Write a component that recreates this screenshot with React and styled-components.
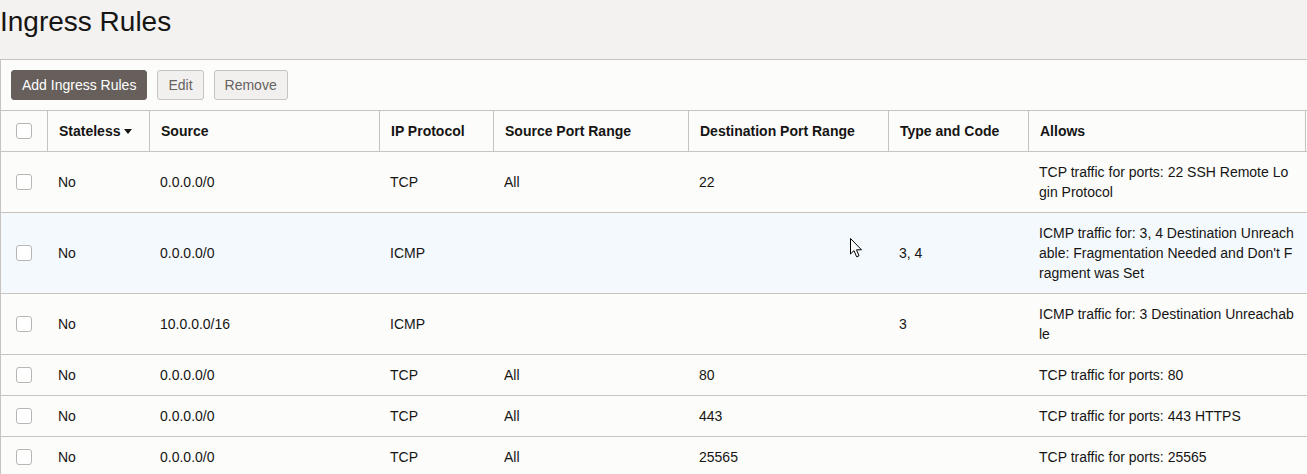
import React from "react";
import styled, { createGlobalStyle } from "styled-components";

const GlobalStyle = createGlobalStyle`
  html, body {
    margin: 0;
    padding: 0;
    background: #f3f2f1;
    font-family: "Liberation Sans", Arial, sans-serif;
    color: #161513;
  }
  * { box-sizing: border-box; }
`;

const Page = styled.div`
  position: relative;
  width: 1307px;
  height: 474px;
  overflow: hidden;
`;

const Title = styled.h1`
  margin: 0;
  padding: 6px 0 21px 0;
  font-size: 28px;
  line-height: 32px;
  font-weight: 400;
  color: #161513;
`;

const Panel = styled.section`
  background: #fcfcfb;
  border-top: 1px solid #c6c3c0;
  border-left: 1px solid #c6c3c0;
  min-height: 420px;
`;

const Toolbar = styled.div`
  display: flex;
  align-items: center;
  gap: 10px;
  padding: 10px 10px;
`;

const Button = styled.button`
  height: 30px;
  padding: 0 10px;
  border-radius: 3px;
  font-family: "Liberation Sans", Arial, sans-serif;
  font-size: 14px;
  line-height: 28px;
  cursor: pointer;
  border: 1px solid ${(p) => (p.$primary ? "#665f5b" : "#c6c3c0")};
  background: ${(p) => (p.$primary ? "#665f5b" : "#f1f0ee")};
  color: ${(p) => (p.$primary ? "#ffffff" : "#656260")};
`;

const COLS = "46px 102px 230px 114px 195px 200px 140px 278px";

const HeaderRow = styled.div`
  display: grid;
  grid-template-columns: ${COLS};
  border-top: 1px solid #c6c3c0;
  border-bottom: 1px solid #c6c3c0;
  height: 42px;
`;

const HeadCell = styled.div`
  display: flex;
  align-items: center;
  padding: 0 11px;
  font-size: 14px;
  font-weight: 700;
  border-left: ${(p) => (p.$first ? "none" : "1px solid #c6c3c0")};
  border-right: ${(p) => (p.$last ? "1px solid #c6c3c0" : "none")};
  white-space: nowrap;
`;

const CheckCell = styled.div`
  display: flex;
  align-items: center;
  padding-left: 15px;
`;

const Checkbox = styled.span`
  display: inline-block;
  width: 16px;
  height: 16px;
  border: 1px solid #b9b6b3;
  border-radius: 3px;
  background: #ffffff;
`;

const Caret = styled.span`
  display: inline-block;
  margin-left: 4px;
  margin-top: 1px;
  width: 0;
  height: 0;
  border-left: 4.5px solid transparent;
  border-right: 4.5px solid transparent;
  border-top: 5px solid #161513;
`;

const Row = styled.div`
  display: grid;
  grid-template-columns: ${COLS};
  border-bottom: 1px solid #c6c3c0;
  background: ${(p) => (p.$hover ? "#f4f9fd" : "transparent")};
`;

const Cell = styled.div`
  display: flex;
  align-items: center;
  padding: 10px 11px;
  font-size: 14px;
  line-height: 20px;
`;

const AllowsCell = styled(Cell)`
  word-break: break-all;
`;

const Cursor = styled.svg`
  position: absolute;
  left: 850px;
  top: 238px;
  width: 13px;
  height: 20px;
  pointer-events: none;
`;

const rules = [
  { source: "0.0.0.0/0", proto: "TCP", srcPort: "All", dstPort: "22", type: "", allows: "TCP traffic for ports: 22 SSH Remote Login Protocol" },
  { source: "0.0.0.0/0", proto: "ICMP", srcPort: "", dstPort: "", type: "3, 4", allows: "ICMP traffic for: 3, 4 Destination Unreachable: Fragmentation Needed and Don't Fragment was Set", hover: true },
  { source: "10.0.0.0/16", proto: "ICMP", srcPort: "", dstPort: "", type: "3", allows: "ICMP traffic for: 3 Destination Unreachable" },
  { source: "0.0.0.0/0", proto: "TCP", srcPort: "All", dstPort: "80", type: "", allows: "TCP traffic for ports: 80" },
  { source: "0.0.0.0/0", proto: "TCP", srcPort: "All", dstPort: "443", type: "", allows: "TCP traffic for ports: 443 HTTPS" },
  { source: "0.0.0.0/0", proto: "TCP", srcPort: "All", dstPort: "25565", type: "", allows: "TCP traffic for ports: 25565" },
];

const App = () => {
  return (
    <Page>
      <GlobalStyle />
      <Title>Ingress Rules</Title>
      <Panel>
        <Toolbar>
          <Button $primary>Add Ingress Rules</Button>
          <Button>Edit</Button>
          <Button>Remove</Button>
        </Toolbar>
        <HeaderRow>
          <CheckCell>
            <Checkbox />
          </CheckCell>
          <HeadCell>
            Stateless
            <Caret />
          </HeadCell>
          <HeadCell>Source</HeadCell>
          <HeadCell>IP Protocol</HeadCell>
          <HeadCell>Source Port Range</HeadCell>
          <HeadCell>Destination Port Range</HeadCell>
          <HeadCell>Type and Code</HeadCell>
          <HeadCell $last>Allows</HeadCell>
        </HeaderRow>
        {rules.map((r, i) => (
          <Row key={i} $hover={r.hover}>
            <CheckCell>
              <Checkbox />
            </CheckCell>
            <Cell>No</Cell>
            <Cell>{r.source}</Cell>
            <Cell>{r.proto}</Cell>
            <Cell>{r.srcPort}</Cell>
            <Cell>{r.dstPort}</Cell>
            <Cell>{r.type}</Cell>
            <AllowsCell>{r.allows}</AllowsCell>
          </Row>
        ))}
      </Panel>
      <Cursor viewBox="0 0 13 20">
        <path
          d="M0.5 0.5 L0.5 16 L4 12.6 L6.6 18.8 L9 17.8 L6.5 11.8 L11.5 11.8 Z"
          fill="#ffffff"
          stroke="#000000"
          strokeWidth="1"
          strokeLinejoin="miter"
        />
      </Cursor>
    </Page>
  );
};

export default App;
